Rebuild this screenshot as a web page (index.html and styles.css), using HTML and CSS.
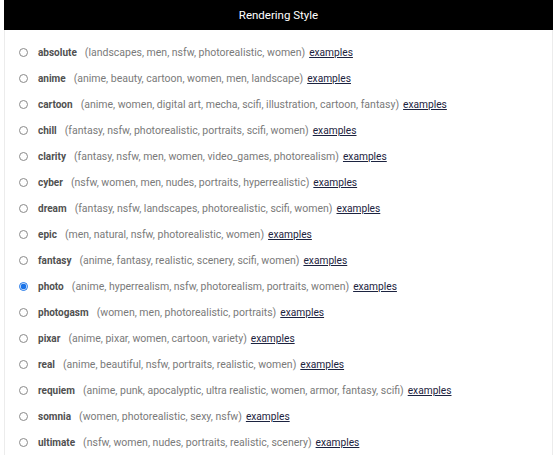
FILE: index.html
```html
<!DOCTYPE html>
<html>
<head>
<meta charset="utf-8">
<link rel="stylesheet" href="styles.css">
</head>
<body>
<div class="panel">
  <div class="header">Rendering Style</div>
  <div class="list">
    <label class="row"><span class="radio"></span><span class="name">absolute</span><span class="desc">(landscapes, men, nsfw, photorealistic, women)</span><a class="link">examples</a></label>
    <label class="row"><span class="radio"></span><span class="name">anime</span><span class="desc">(anime, beauty, cartoon, women, men, landscape)</span><a class="link">examples</a></label>
    <label class="row"><span class="radio"></span><span class="name">cartoon</span><span class="desc">(anime, women, digital art, mecha, scifi, illustration, cartoon, fantasy)</span><a class="link">examples</a></label>
    <label class="row"><span class="radio"></span><span class="name">chill</span><span class="desc">(fantasy, nsfw, photorealistic, portraits, scifi, women)</span><a class="link">examples</a></label>
    <label class="row"><span class="radio"></span><span class="name">clarity</span><span class="desc">(fantasy, nsfw, men, women, video_games, photorealism)</span><a class="link">examples</a></label>
    <label class="row"><span class="radio"></span><span class="name">cyber</span><span class="desc">(nsfw, women, men, nudes, portraits, hyperrealistic)</span><a class="link">examples</a></label>
    <label class="row"><span class="radio"></span><span class="name">dream</span><span class="desc">(fantasy, nsfw, landscapes, photorealistic, scifi, women)</span><a class="link">examples</a></label>
    <label class="row"><span class="radio"></span><span class="name">epic</span><span class="desc">(men, natural, nsfw, photorealistic, women)</span><a class="link">examples</a></label>
    <label class="row"><span class="radio"></span><span class="name">fantasy</span><span class="desc">(anime, fantasy, realistic, scenery, scifi, women)</span><a class="link">examples</a></label>
    <label class="row"><span class="radio checked"></span><span class="name">photo</span><span class="desc">(anime, hyperrealism, nsfw, photorealism, portraits, women)</span><a class="link">examples</a></label>
    <label class="row"><span class="radio"></span><span class="name">photogasm</span><span class="desc">(women, men, photorealistic, portraits)</span><a class="link">examples</a></label>
    <label class="row"><span class="radio"></span><span class="name">pixar</span><span class="desc">(anime, pixar, women, cartoon, variety)</span><a class="link">examples</a></label>
    <label class="row"><span class="radio"></span><span class="name">real</span><span class="desc">(anime, beautiful, nsfw, portraits, realistic, women)</span><a class="link">examples</a></label>
    <label class="row"><span class="radio"></span><span class="name">requiem</span><span class="desc">(anime, punk, apocalyptic, ultra realistic, women, armor, fantasy, scifi)</span><a class="link">examples</a></label>
    <label class="row"><span class="radio"></span><span class="name">somnia</span><span class="desc">(women, photorealistic, sexy, nsfw)</span><a class="link">examples</a></label>
    <label class="row"><span class="radio"></span><span class="name">ultimate</span><span class="desc">(nsfw, women, nudes, portraits, realistic, scenery)</span><a class="link">examples</a></label>
  </div>
</div>
</body>
</html>
```

FILE: styles.css
```css
html, body {
  margin: 0;
  padding: 0;
  background: #fff;
}
body {
  font-family: Roboto, "Liberation Sans", sans-serif;
}
.panel {
  margin: 0 4px;
  width: 549px;
}
.header {
  height: 30px;
  background: #000;
  color: #fff;
  font-size: 11.5px;
  display: flex;
  align-items: center;
  justify-content: center;
}
.list {
  border-left: 1px solid #ececec;
  border-right: 1px solid #ececec;
  padding-top: 9px;
}
.row {
  display: flex;
  align-items: center;
  height: 26px;
  font-size: 10.5px;
  padding-left: 14px;
  white-space: nowrap;
}
.radio {
  width: 7px;
  height: 7px;
  border: 1px solid #8a8a8a;
  border-radius: 50%;
  box-sizing: content-box;
  margin-right: 10px;
  flex: none;
}
.radio.checked {
  border-color: #1a73e8;
  background: radial-gradient(circle, #1a73e8 0 2.6px, #fff 3.2px);
}
.name {
  font-weight: bold;
  font-size: 10px;
  color: #505050;
  margin-right: 8px;
}
.desc {
  color: #7a7a7a;
  margin-right: 4px;
}
.link {
  color: #1c2340;
  font-size: 10.2px;
  text-decoration: underline;
}
```
